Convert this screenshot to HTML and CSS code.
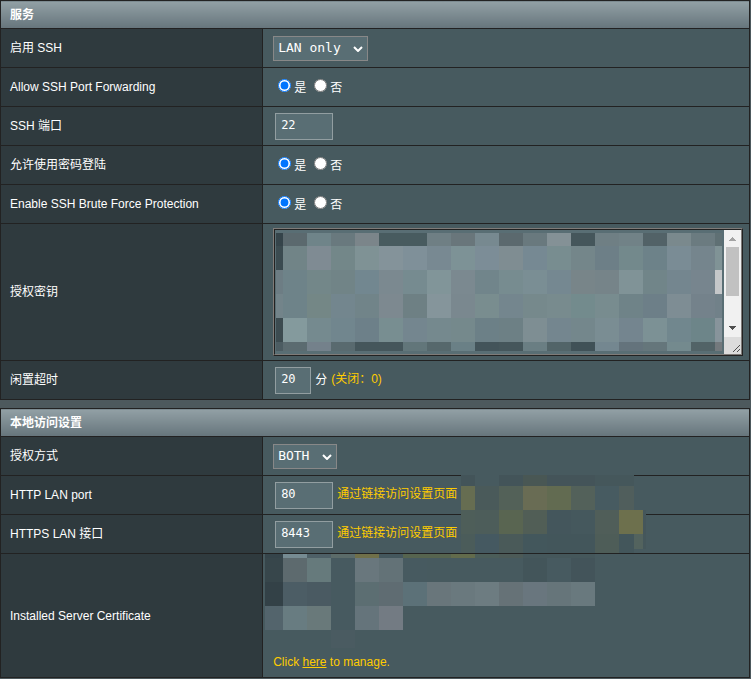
FILE: index.html
```
<!DOCTYPE html>
<html lang="zh-CN">
<head>
<meta charset="utf-8">
<title>服务</title>
<link rel="stylesheet" href="styles.css">
</head>
<body>
<main>
<table class="form">
<colgroup><col class="name"><col></colgroup>
<thead><tr><th colspan="2" scope="colgroup">服务</th></tr></thead>
<tbody>
<tr>
<th scope="row"><label for="ssh">启用 SSH</label></th>
<td><div class="pick"><select id="ssh" class="select wide"><option>LAN only</option></select><svg class="chevron" width="10" height="6" viewBox="0 0 10 6" aria-hidden="true"><path d="M1 1l4 4 4-4"/></svg></div></td>
</tr>
<tr>
<th scope="row">Allow SSH Port Forwarding</th>
<td><div class="radios"><label><input type="radio" name="fwd" checked><span>是</span></label><label><input type="radio" name="fwd"><span>否</span></label></div></td>
</tr>
<tr>
<th scope="row"><label for="port">SSH 端口</label></th>
<td><div class="line"><input id="port" class="text" type="text" value="22"></div></td>
</tr>
<tr>
<th scope="row">允许使用密码登陆</th>
<td><div class="radios"><label><input type="radio" name="pwd" checked><span>是</span></label><label><input type="radio" name="pwd"><span>否</span></label></div></td>
</tr>
<tr>
<th scope="row">Enable SSH Brute Force Protection</th>
<td><div class="radios"><label><input type="radio" name="brute" checked><span>是</span></label><label><input type="radio" name="brute"><span>否</span></label></div></td>
</tr>
<tr class="keys">
<th scope="row"><label for="keys">授权密钥</label></th>
<td>
<div class="frame"><div class="area">
<textarea id="keys"></textarea>
<svg class="mosaic keymask" width="446" height="118" shape-rendering="crispEdges" aria-hidden="true"></svg>
<svg class="bar" width="17" height="124" viewBox="0 0 17 124" shape-rendering="crispEdges" aria-hidden="true">
<path fill="#f1f1f1" d="M0 0h17v107H0z"/><path fill="#c1c1c1" d="M2 17h13v49H2z"/>
<path fill="#a3a3a3" d="M8 7h1v1h1v1h1v1h1v1H5v-1h1V9h1V8h1z"/>
<path fill="#505050" d="M5 96h7v1h-1v1h-1v1H9v1H8v-1H7v-1H6v-1H5z"/>
<path fill="#dcdcdc" d="M0 107h17v17H0z"/>
<path d="M8.500 122.500l7-7M12.500 122.500l3-3" stroke="#505050" fill="none"/>
</svg>
</div></div>
</td>
</tr>
<tr>
<th scope="row"><label for="idle">闲置超时</label></th>
<td><div class="line"><input id="idle" class="text short" type="text" value="20"><span class="unit">分</span><span class="hint">(关闭：0)</span></div></td>
</tr>
</tbody>
</table>

<table class="form">
<colgroup><col class="name"><col></colgroup>
<thead><tr><th colspan="2" scope="colgroup">本地访问设置</th></tr></thead>
<tbody>
<tr>
<th scope="row"><label for="auth">授权方式</label></th>
<td><div class="pick"><select id="auth" class="select"><option>BOTH</option></select><svg class="chevron" width="10" height="6" viewBox="0 0 10 6" aria-hidden="true"><path d="M1 1l4 4 4-4"/></svg></div></td>
</tr>
<tr>
<th scope="row"><label for="http">HTTP LAN port</label></th>
<td><div class="line"><input id="http" class="text" type="text" value="80"><a class="link" href="#http">通过链接访问设置页面 <span>.</span></a></div>
<svg class="mosaic linkmask" width="185" height="78" shape-rendering="crispEdges" aria-hidden="true"></svg></td>
</tr>
<tr>
<th scope="row"><label for="https">HTTPS LAN 接口</label></th>
<td><div class="line"><input id="https" class="text" type="text" value="8443"><a class="link" href="#https">通过链接访问设置页面 <span>.</span></a></div></td>
</tr>
<tr class="cert">
<th scope="row">Installed Server Certificate</th>
<td><svg class="mosaic certmask" width="330" height="94" shape-rendering="crispEdges" aria-hidden="true"></svg>
<p>Click <a href="#cert">here</a> to manage.</p></td>
</tr>
</tbody>
</table>
</main>
<script src="mosaic.js"></script>
</body>
</html>
```
FILE: styles.css
```
* { box-sizing: border-box; }

body {
  margin: 0;
  background: #4d595d;
  color: #fff;
  font: 12px/16px "Liberation Sans", Arial, "Noto Sans CJK SC", sans-serif;
}

main { padding-right: 1px; }

.form {
  width: 100%;
  table-layout: fixed;
  border-collapse: collapse;
  margin-bottom: 8px;
}

.form .name { width: 35%; }

.form th, .form td {
  height: 39px;
  padding: 0 9px;
  border: 1px solid #222;
  text-align: left;
  vertical-align: middle;
}

.form thead th {
  height: 28px;
  background: linear-gradient(#92a0a5, #66757c);
  font-weight: bold;
}

.form tbody th {
  background: #2f3a3e;
  font-weight: normal;
}

.form td {
  position: relative;
  padding-left: 10px;
  background: #475a5f;
}

.select, .text {
  border: 1px solid #929ea1;
  border-radius: 0;
  background-color: #596e74;
  color: #fff;
  font-family: "DejaVu Sans Mono", monospace;
}

.pick {
  position: relative;
  width: fit-content;
}

.select {
  display: block;
  width: 64px;
  height: 25px;
  padding: 0 4px 1px;
  border-color: #888;
  font-size: 13px;
  appearance: none;
}

.select.wide { width: 95px; }

.chevron {
  position: absolute;
  top: 10px;
  right: 5px;
  fill: none;
  stroke: #fff;
  stroke-width: 2;
  pointer-events: none;
}

.text {
  width: 58px;
  height: 27px;
  margin: 0 4px 0 2px;
  padding: 0 5px 3px;
  font-size: 12px;
}

.text.short { width: 36px; }

.line { display: flex; align-items: center; }
.unit { margin-right: 4px; }
.hint, .link, .cert p, .cert a { color: #fc0; }
.hint, .link { padding-bottom: 2px; }
.link { text-decoration: none; }

.radios { display: flex; gap: 8px; padding-left: 5px; }
.radios label { display: flex; gap: 3px; }
.radios input { width: 13px; height: 13px; margin: 0; }
.radios span { padding-top: 1px; }

.keys td { height: 137px; padding-right: 6px; }

.frame {
  border: 1px solid;
  border-color: #7f7b78 #222 #222 #7f7b78;
}

.area {
  position: relative;
  display: flex;
  overflow: hidden;
  border: 1px solid;
  border-color: #222 #7f7b78 #7f7b78 #222;
  background: #596e74;
}

.area textarea {
  flex: 1;
  min-width: 0;
  height: 124px;
  padding: 2px;
  border: 0;
  background: transparent;
  color: #fff;
  font: 12px "DejaVu Sans Mono", monospace;
  resize: none;
  overflow: hidden;
}

.bar { position: relative; flex: none; }

.mosaic { position: absolute; pointer-events: none; }
.keymask { left: 1px; top: 3px; }
.linkmask { left: 198px; top: -1px; z-index: 1; }
.certmask { left: 2px; top: 0; }

.cert td { height: 124px; vertical-align: bottom; }
.cert p { margin: 0 0 7px; }
```
FILE: mosaic.js
```
// Each mosaic: column edges, row edges, then one list of colours per row ("" leaves a cell clear).
function draw(selector, xs, ys, rows) {
  const svg = document.querySelector(selector);
  rows.forEach((row, r) => row.split(",").forEach((color, c) => {
    if (!color) return;
    const rect = document.createElementNS("http://www.w3.org/2000/svg", "rect");
    rect.setAttribute("x", xs[c]);
    rect.setAttribute("y", ys[r]);
    rect.setAttribute("width", xs[c + 1] - xs[c]);
    rect.setAttribute("height", ys[r + 1] - ys[r]);
    rect.setAttribute("fill", "#" + color);
    svg.append(rect);
  }));
}

const keyColumns = [0];
for (let i = 0; i < 19; i++) keyColumns.push(7 + i * 24);
keyColumns.push(446);
draw(".keymask", keyColumns, [0, 13, 37, 61, 85, 109, 118], [
  "35444a,5b696e,6f8489,69797e,7b858a,485b5f,485b5f,6f7f84,69767b,778990,5b696e,69797e,849196,45565b,6f7f84,718287,526267,7a898d,6b7b80,5f7074",
  "3b4b50,718487,7f8b93,738789,7f9295,84939a,7f9099,788992,7d9296,7c8d97,7f8d92,768993,788d90,74868a,6d7f87,73898c,6d8289,7a8c95,75858d,809396",
  "6d7d84,6e8389,738789,718487,728790,7b8990,768b90,819599,7b8990,71858b,778c90,7a8e94,758891,788589,768489,809397,718589,74868f,77858e,c5c7c9",
  "73848a,6e8389,748786,73868e,718489,7d8990,6e8084,85959b,7a888f,798d8f,74868e,76898c,788b8e,738b8d,788c8f,6f8388,6d7f88,7e8d94,74828b,718189",
  "3c4b50,849a9d,758a8f,71868e,6d8089,788e91,74868f,75898e,75898c,6c8087,6d8085,7e8e93,74868f,74878c,7a8d93,74858f,7c9195,71878e,6d8589,87949b",
  "4c5c62,5b6b70,74818b,596a6f,45565b,45565b,62767a,56686c,6a8086,43545a,45565b,6a7e83,526468,405157,748790,64737c,65767b,748a8e,526367,73797d"
]);

draw(".linkmask", [0, 14, 38, 62, 86, 110, 134, 158, 173, 182, 185], [0, 11, 35, 59, 74, 78], [
  "435459,475a5f,435459,495754,445459,445459,45575b,45575b,,",
  "666d51,4a5a5a,536158,696c54,626b51,53615a,475b61,505e5c,,",
  "4e5e59,4d5d5a,596551,515e56,44565c,45585d,505e59,6d704d,6d704d,45565b",
  "4b5c5a,455961,4a5a59,43575c,43565b,43565b,4e5d58,43565b,53635e,45575b",
  "4b5c5a,455961,4a5a59,43575c,43565b,43565b,4e5d58,43565b,475a5f,475a5f"
]);

const certColumns = [0];
for (let i = 0; i < 14; i++) certColumns.push(18 + i * 24);
draw(".certmask", certColumns, [0, 4, 28, 52, 76, 94], [
  "35444a,768b92,4e6067,5b6b69,70704a,44575d,56644f,56644f,626b4c,4b5d59,4c5a57,45575b,45575b,45575b",
  "37464b,5d6a6e,667a7c,475a60,69777d,637277,475a60,475a5f,475a5f,475a5f,475a5f,43555a,475a60,43545a",
  "334147,4c5d65,4a5a62,475a60,5c6e72,5f6c72,5c7178,69767b,6a797e,6d7c81,667277,69767e,66757a,69797e",
  "53646c,687c81,69797a,475a60,65747b,737b83,,,,,,,,",
  ",,,4a5b61,,,,,,,,,,"
]);
```
